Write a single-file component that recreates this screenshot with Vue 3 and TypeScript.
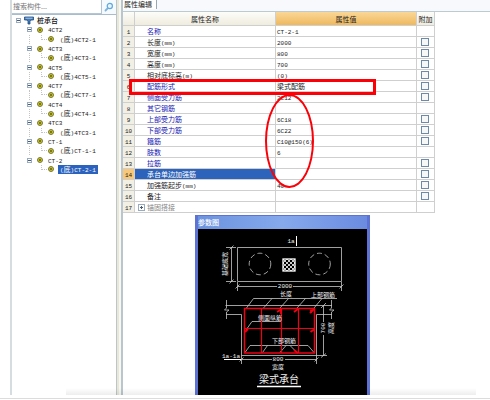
<script setup lang="ts">
import { reactive, ref } from 'vue'

interface Row {
  name: string
  value: string
  kind: 'link' | 'plain' | 'selected' | 'group'
  box: boolean
}

const query = ref('')
const groups: string[] = ['4CT2', '4CT3', '4CT5', '4CT7', '4CT4', '4TC3', 'CT-1', 'CT-2']
const active = 'CT-2'

const rows: Row[] = [
  { name: '名称', value: 'CT-2-1', kind: 'link', box: false },
  { name: '长度(mm)', value: '2000', kind: 'plain', box: true },
  { name: '宽度(mm)', value: '800', kind: 'plain', box: true },
  { name: '高度(mm)', value: '700', kind: 'plain', box: true },
  { name: '相对底标高(m)', value: '(0)', kind: 'plain', box: true },
  { name: '配筋形式', value: '梁式配筋', kind: 'link', box: true },
  { name: '侧面受力筋', value: '2C12', kind: 'link', box: true },
  { name: '其它钢筋', value: '', kind: 'link', box: false },
  { name: '上部受力筋', value: '6C18', kind: 'link', box: true },
  { name: '下部受力筋', value: '6C22', kind: 'link', box: true },
  { name: '箍筋', value: 'C10@150(6)', kind: 'link', box: true },
  { name: '肢数', value: '6', kind: 'link', box: false },
  { name: '拉筋', value: '', kind: 'link', box: true },
  { name: '承台单边加强筋', value: '', kind: 'selected', box: true },
  { name: '加强筋起步(mm)', value: '40', kind: 'plain', box: true },
  { name: '备注', value: '', kind: 'plain', box: true },
  { name: '锚固搭接', value: '', kind: 'group', box: false },
]
const checked = reactive<boolean[]>(rows.map(() => false))

// Half-width runs are set in a smaller monospace face than the full-width ones.
function runs(text: string): { t: string; half: boolean }[] {
  return (text.match(/[\x20-\x7e]+|[^\x20-\x7e]+/g) ?? []).map((t) => ({
    t,
    half: /^[\x20-\x7e]/.test(t),
  }))
}
</script>

<template>
  <div class="page">
    <main class="app">
      <aside class="side">
        <form class="search" @submit.prevent>
          <input v-model="query" class="query" type="text" placeholder="搜索构件..." aria-label="搜索构件" />
          <button class="find" type="submit" aria-label="搜索">
            <svg viewBox="0 0 10 10" width="10" height="10">
              <path d="M4 6 L1.5 8.5" stroke="#7fb4dc" stroke-width="1.8" stroke-linecap="round" />
              <circle cx="5.8" cy="4" r="2.6" fill="#e8f6ff" stroke="#5fa8dc" stroke-width="1.2" />
            </svg>
          </button>
        </form>
        <ul class="tree">
          <li class="node root">
            <i class="toggle"></i>
            <svg class="pile" viewBox="0 0 10 9" width="10" height="9">
              <path d="M.5 1 H9.5 V4 H7 L6 5.5 V8 H4 V5.5 L3 4 H.5Z" fill="#4379b5" stroke="#1f4b82" stroke-width=".8" />
              <path d="M1.5 2.2 H8.5" stroke="#b5d5f2" stroke-width=".9" />
            </svg>
            <span class="label">桩承台</span>
          </li>
          <template v-for="g in groups" :key="g">
            <li class="node branch">
              <i class="toggle"></i><i class="dot"></i>
              <span class="label"><span class="half">{{ g }}</span></span>
            </li>
            <li class="node leaf" :class="{ last: g === active }">
              <i class="elbow"></i><i class="dot"></i>
              <span class="label" :class="{ on: g === active }"><span v-for="(r, i) in runs(`(底)${g}-1`)" :key="i" :class="{ half: r.half }">{{ r.t }}</span></span>
            </li>
          </template>
        </ul>
      </aside>
      <div class="split"></div>
      <section class="editor">
        <header class="tabs"><h1 class="tab">属性编辑</h1></header>
        <div class="sheet">
          <table class="props">
            <colgroup>
              <col class="c-num" /><col /><col /><col class="c-add" />
            </colgroup>
            <thead>
              <tr><th></th><th>属性名称</th><th class="hot">属性值</th><th>附加</th></tr>
            </thead>
            <tbody>
              <tr v-for="(row, i) in rows" :key="row.name" :class="row.kind">
                <th scope="row"><span class="half">{{ i + 1 }}</span></th>
                <td class="name"><i v-if="row.kind === 'group'" class="toggle plus"></i><span v-for="(r, k) in runs(row.name)" :key="k" :class="{ half: r.half }">{{ r.t }}</span></td>
                <td class="value"><span v-for="(r, k) in runs(row.value)" :key="k" :class="{ half: r.half }">{{ r.t }}</span></td>
                <td class="add"><input v-if="row.box" v-model="checked[i]" class="box" type="checkbox" :aria-label="`附加 ${row.name}`" /></td>
              </tr>
            </tbody>
          </table>
          <div class="mark-row"></div>
          <div class="mark-oval"></div>
        </div>
        <figure class="window">
          <figcaption class="title">参数图</figcaption>
          <svg class="drawing" viewBox="198 229 169 166">
            <g fill="none" stroke="#c8c8c8" stroke-width=".8">
              <path d="M237.5 247.5H341.5V281.5H237.5Z" />
              <circle cx="260" cy="264" r="10.8" stroke-dasharray="5 3" />
              <circle cx="319.5" cy="264" r="10.8" stroke-dasharray="5 3" />
              <path d="M231.5 247V282M226 247.5H236M226 281.5H236M229.5 249.5L233.5 245.5M229.5 283.5L233.5 279.5" />
              <path d="M237.5 282V291M341.5 282V291M237.5 286.5H277M293 286.5H341.5M235.5 288.5L239.5 284.5M339.5 288.5L343.5 284.5" />
              <path d="M246.5 308L253.5 298.5H337M263.5 308L272 298.5M280 308L288.5 298.5M297 308L305.5 298.5M314 308L322 298.5" />
              <path d="M225.5 305.5H332M226.5 300V308L224.5 310H229L226.5 312V319M331.5 300V308L329.5 310H334L331.5 312V319" />
              <path d="M226 314.5H241.5V364M332 314.5H316.5V364M241.5 355.5H327" />
              <path d="M323.5 305V322M323.5 335V356M321 308L326 303M321 357.5L326 353.5" />
              <path d="M241.5 359.5H272M285 359.5H316.5M239.5 361.5L243.5 357.5M314.5 361.5L318.5 357.5" />
              <path d="M246 330L252 321.5H282" />
              <path d="M245 352.5L250 345.5H308L314 352.5M262.5 352.5L267.5 345.5M280 352.5L286 345.5M290 345.5L297 352.5" />
            </g>
            <g fill="none" stroke="#fff">
              <path d="M296.5 236V246M224 359.5H241" />
              <path d="M257 386.5H301" stroke-width="1.3" />
              <rect x="283" y="259" width="12" height="12" stroke-width="1.3" />
              <path d="M283 263L287 259M283 267L291 259M283 271L295 259M287 271L295 263M291 271L295 267M283 267L287 271M283 263L291 271M283 259L295 271M287 259L295 267M291 259L295 263" stroke-width=".8" />
            </g>
            <g fill="none" stroke="#f00012">
              <rect x="244.5" y="308.5" width="70" height="44.5" stroke-width="1.5" />
              <path d="M261.5 309V353M281.5 309V353M298.5 309V353M245 328.5H314" stroke-width="1.2" />
              <path d="M245 332L248 329M310.5 332L314 329.5M277 312L281 309.5V314M294 312L298 309M310 313L314 309M311 309.5V313M294 350L298 353" stroke-width="1.8" />
            </g>
            <g class="ink" font-size="6" text-anchor="middle">
              <text transform="translate(227 264) rotate(-90)">基础底宽</text>
              <text class="mono" x="291" y="243">1a</text>
              <text class="mono" x="285" y="288">2000</text>
              <text x="286" y="296">长度</text>
              <text x="323" y="297">上部钢筋</text>
              <text x="270" y="320">侧面纵筋</text>
              <text x="284" y="343">下部钢筋</text>
              <text class="mono" transform="translate(325 328) rotate(-90)">700</text>
              <text transform="translate(333 328) rotate(-90)">高度</text>
              <text class="mono" x="278" y="361">800</text>
              <text x="278" y="369">宽度</text>
              <text class="mono" x="231" y="358">1a-1a</text>
              <text x="279" y="383" font-size="10">梁式承台</text>
            </g>
          </svg>
        </figure>
      </section>
    </main>
  </div>
</template>

<style>
body {
  margin: 0;
  background: #fff;
}
</style>

<style scoped>
* {
  box-sizing: border-box;
}
.page {
  position: relative;
  display: flex;
  flex-direction: column;
  min-height: 100vh;
  font: 7px/9px "Noto Sans CJK SC", "Liberation Sans", sans-serif;
  color: #222;
}
.page::after {
  content: "";
  position: absolute;
  right: 0;
  bottom: 1px;
  left: 0;
  height: 1px;
  background: #dcdcdc;
}
.half {
  font-family: "Liberation Mono", monospace;
  font-size: 6px;
  line-height: 0;
}
.app {
  display: flex;
  flex: 1;
  margin-left: 10px;
  padding-bottom: 5px;
  position: relative;
}
.app::after {
  content: "";
  position: absolute;
  right: 14px;
  bottom: 5px;
  left: 56px;
  height: 7px;
  background: linear-gradient(transparent, rgba(0, 0, 0, 0.07));
  pointer-events: none;
}
.side {
  width: 106px;
  flex: none;
  border-left: 2px solid #d5dde0;
}
.search {
  display: flex;
  height: 15px;
  border-bottom: 1px solid #a9bccb;
}
.query {
  flex: 1;
  min-width: 0;
  padding: 0 1px;
  border: 1px solid #b4c6d4;
  border-top: 0;
  border-left: 0;
  background: #fff;
  font: inherit;
  outline: 0;
}
.query::placeholder {
  color: #777;
  opacity: 1;
}
.find {
  display: flex;
  width: 14px;
  padding: 2px;
  border: 0;
  background: #f4fafd;
}
.tree {
  display: grid;
  grid-template-rows: repeat(17, 1fr);
  height: 158px;
  margin: 1px 0 0;
  padding: 0;
  list-style: none;
}
.node {
  position: relative;
  display: flex;
  align-items: center;
  min-height: 0;
}
.root {
  gap: 3px;
  padding-left: 4px;
}
.root .label {
  color: #111;
  padding: 0;
  font-weight: 500;
}
.branch {
  padding-left: 15px;
  gap: 5px;
}
.leaf {
  padding-left: 29px;
  gap: 1px;
}
.leaf::before {
  content: "";
  position: absolute;
  top: 0;
  bottom: 0;
  left: 17px;
  border-left: 1px dotted #c4c4c4;
}
.leaf.last::before {
  display: none;
}
.toggle {
  display: block;
  position: relative;
  flex: none;
  width: 5px;
  height: 5px;
  border: 1px solid #98abc0;
  background: #fff;
}
.toggle::before {
  content: "";
  position: absolute;
  top: 1px;
  left: 0;
  width: 3px;
  height: 1px;
  background: #465b78;
}
.pile {
  flex: none;
}
.dot {
  flex: none;
  width: 6px;
  height: 6px;
  border: 1px solid #77752a;
  border-radius: 50%;
  background: radial-gradient(#66640d 18%, #c9c62c 50%);
}
.elbow {
  flex: none;
  align-self: flex-start;
  width: 6px;
  height: 5px;
  border: 1px dotted #c4c4c4;
  border-width: 0 0 1px 1px;
}
.label {
  padding: 0 2px;
  line-height: 9px;
  white-space: nowrap;
}
.branch .label {
  padding: 0;
}
.leaf .label {
  margin-left: 3px;
}
.label.on {
  background: #2b62bd;
  color: #fff;
}
.split {
  width: 7px;
  flex: none;
  border: solid #b9c6ce;
  border-width: 0 2px 0 1px;
  background: linear-gradient(90deg, #eae8d5 50%, #f7f7f3 50%);
}
.editor {
  flex: 1;
  min-width: 0;
}
.tabs {
  height: 12px;
  padding-bottom: 2px;
  border-bottom: 1px solid #bccad2;
  background: #f8f9fc;
}
.tab {
  display: inline-block;
  height: 9px;
  margin: 0;
  padding: 0 4px 0 1px;
  border-right: 1px solid #98a8b4;
  background: #fff;
  font-size: 7px;
  font-weight: 400;
  line-height: 9px;
  vertical-align: top;
}
.sheet {
  position: relative;
  width: 85%;
}
.props {
  width: 100%;
  table-layout: fixed;
  border-collapse: separate;
  border-spacing: 0;
}
.c-num {
  width: 12px;
}
.c-add {
  width: 18px;
}
.props th,
.props td {
  height: 11px;
  padding: 0;
  border: solid #cfcfcf;
  border-width: 0 1px 1px 0;
  line-height: 10px;
  font-weight: 400;
  white-space: nowrap;
}
.props thead th {
  height: 14px;
  background: linear-gradient(#fdfdf9, #efecdf);
  line-height: 12px;
}
.props thead .hot {
  background: linear-gradient(#fad796, #eeb95f);
}
.props tbody th {
  background: #f2f0e4;
}
.props .name {
  position: relative;
  padding-left: 12px;
}
.props .value {
  padding-left: 1px;
}
.link .name {
  color: #1414b4;
}
.group .name {
  color: #888;
}
.selected .name {
  background: #2d63ba;
  color: #fff;
}
.props .selected th {
  background: #f8c878;
}
.plus {
  position: absolute;
  top: 2px;
  left: 3px;
  width: 7px;
  height: 7px;
}
.plus::before {
  top: 2px;
  left: 1px;
}
.plus::after {
  content: "";
  position: absolute;
  top: 1px;
  left: 2px;
  width: 1px;
  height: 3px;
  background: #465b78;
}
.box {
  display: block;
  width: 8px;
  height: 8px;
  margin: 1px auto;
  border: 1px solid #6d8ba8;
  background: #f6f7f7;
  appearance: none;
}
.box:checked {
  background: #2b62bd;
}
.mark-row {
  position: absolute;
  top: 67px;
  left: 2%;
  width: 79%;
  height: 16px;
  border: 3px solid #fb0007;
  pointer-events: none;
}
.mark-oval {
  position: absolute;
  top: 82px;
  left: 142px;
  width: 49px;
  height: 94px;
  border: 2px solid #fb0007;
  border-radius: 50%;
  pointer-events: none;
}
.window {
  width: 175px;
  margin: 2px 0 0 72px;
  border: solid #5c73d4;
  border-width: 1px 3px 0;
  background: #000;
}
.title {
  height: 13px;
  background: linear-gradient(90deg, #6c93df, #86a9ec 50%, #6b8be0);
  color: #fff;
  font-size: 7px;
  font-weight: 500;
  line-height: 13px;
}
.drawing {
  display: block;
  width: 100%;
}
.ink {
  fill: #f0f0f0;
}
.mono {
  font-family: "Liberation Mono", monospace;
}
</style>
